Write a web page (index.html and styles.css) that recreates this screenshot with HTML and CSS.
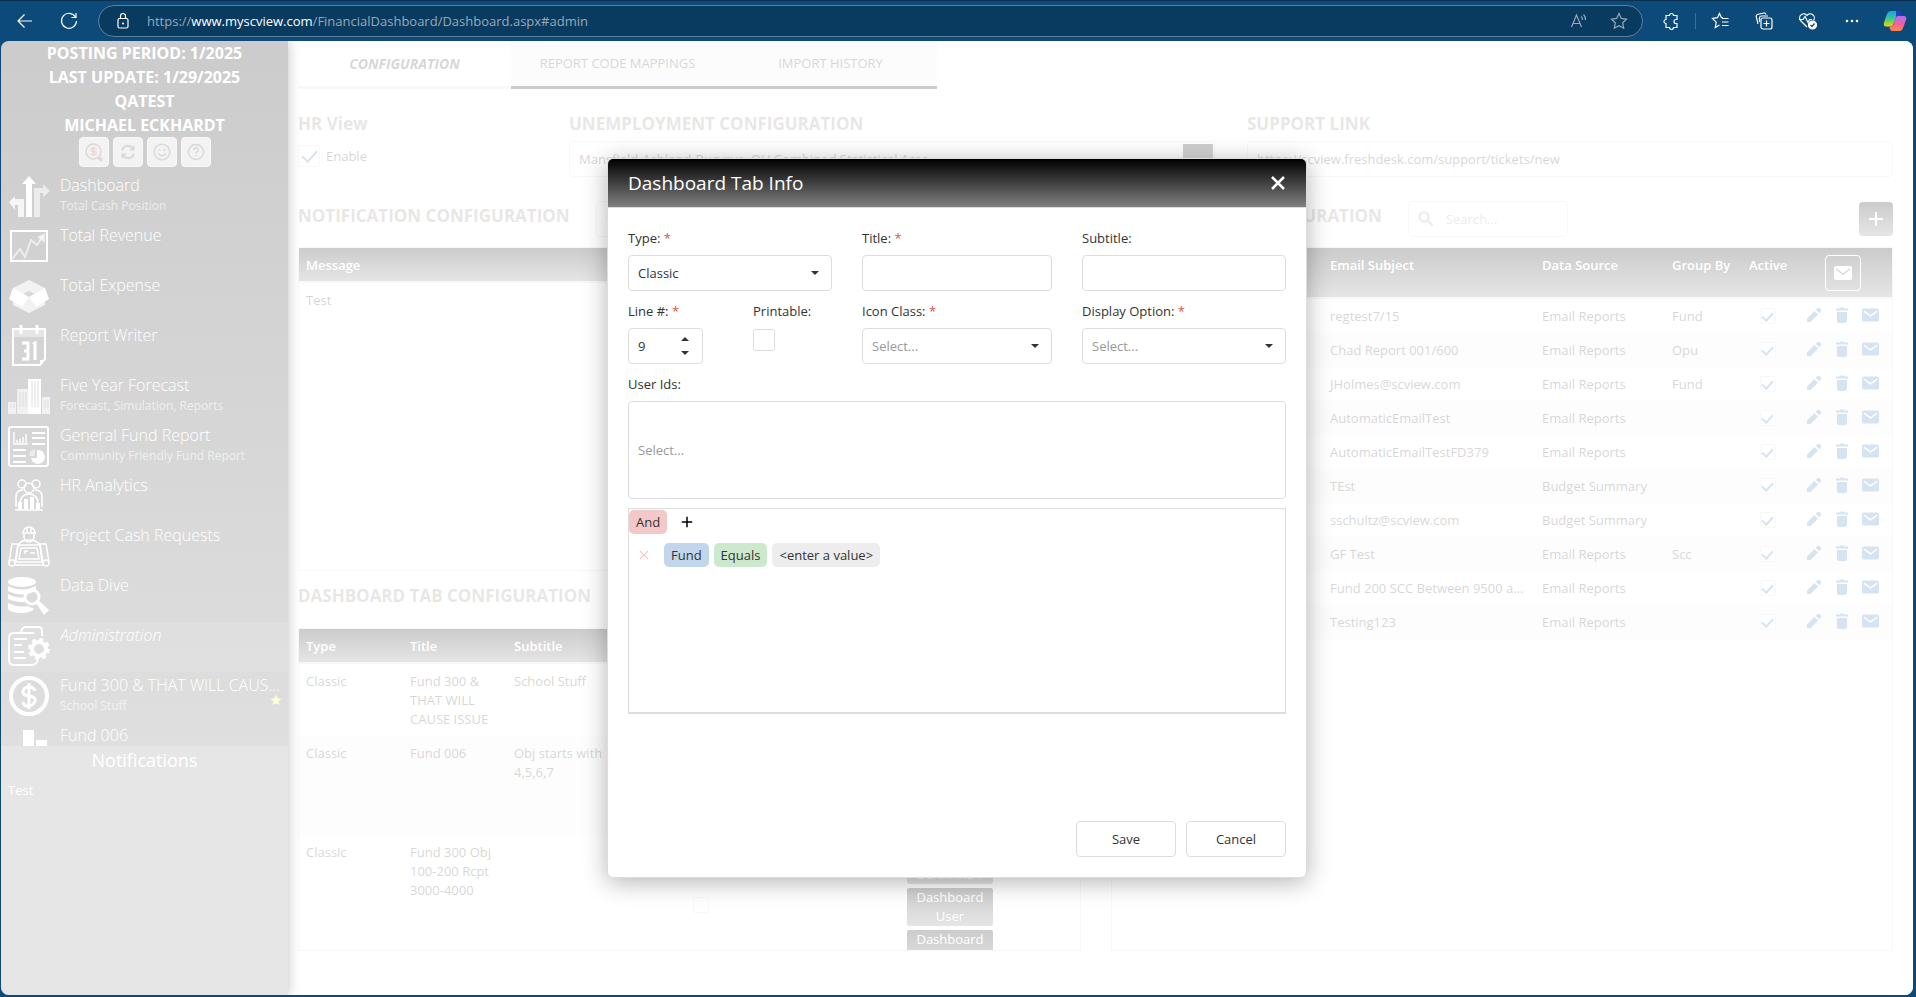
FILE: index.html
```html
<!DOCTYPE html>
<html lang="en">
<head>
  <meta charset="UTF-8" />
  <meta name="viewport" content="width=device-width, initial-scale=1.0"/>
  <title>Financial Dashboard</title>
  <link rel="stylesheet" href="styles.css">
</head>
<body>
  <!-- shared icons -->
  <svg class="sprite" aria-hidden="true">
    <symbol id="i-mail" viewBox="0 0 18 14">
      <rect x="0" y="0" width="18" height="14" rx="2" fill="currentColor"/>
      <path d="M2 3l7 5 7-5" fill="none" stroke="var(--line, #fff)" stroke-width="1.5"/>
    </symbol>
    <symbol id="i-pencil" viewBox="0 0 16 16">
      <path d="M1 15v-3.500l7.500-7.500 3.500 3.500L4.500 15zM9.800 2.800l1.700-1.700a1.500 1.500 0 0 1 2 0l1.400 1.400a1.500 1.500 0 0 1 0 2l-1.700 1.700z" fill="currentColor"/>
    </symbol>
    <symbol id="i-trash" viewBox="0 0 14 16">
      <path d="M1 1.500h3.500L5.500.500h3l1 1H13v2H1zM2 5h10v9a2 2 0 0 1-2 2H4a2 2 0 0 1-2-2z" fill="currentColor"/>
    </symbol>
    <symbol id="i-search" viewBox="0 0 16 16">
      <circle cx="6" cy="6" r="4.500" fill="none" stroke="currentColor" stroke-width="2"/>
      <path d="M9.500 9.500l5 5" stroke="currentColor" stroke-width="2.400"/>
    </symbol>
    <symbol id="i-plus" viewBox="0 0 16 16">
      <path d="M8 1v14M1 8h14" stroke="currentColor" stroke-width="2" fill="none"/>
    </symbol>
  </svg>

  <header class="toolbar">
    <button class="tool" aria-label="Back"><svg width="20" height="20" viewBox="0 0 20 20"><path d="M17 10H3M9.500 3.500L3 10l6.500 6.500"/></svg></button>
    <button class="tool" aria-label="Refresh"><svg width="20" height="20" viewBox="0 0 20 20"><path d="M16.500 6A7.500 7.500 0 1 0 17.500 10M17 2v4.500h-4.500"/></svg></button>
    <div class="address">
      <svg class="lock" width="16" height="18" viewBox="0 0 16 18"><rect x="3" y="6.500" width="10" height="9.500" rx="1.500"/><path d="M5.500 6.500V4a2.500 2.500 0 0 1 5 0v2.500"/><circle cx="8" cy="11.500" r=".5"/></svg>
      <span class="url">https://<b>www.myscview.com</b>/FinancialDashboard/Dashboard.aspx#admin</span>
      <button class="tool dim" aria-label="Read aloud"><svg width="18" height="18" viewBox="0 0 18 18"><path d="M1.500 15L6.500 3l5 12M3 11.500h7M11 4.500a4 4 0 0 1 1.500 3.500M13.500 2.500a7 7 0 0 1 2 5.500"/></svg></button>
      <button class="tool dim" aria-label="Favorite"><svg width="18" height="18" viewBox="0 0 18 18"><path d="M9 1.500l2.300 4.900 5.200.7-3.800 3.700 1 5.400L9 13.600l-4.700 2.600 1-5.400L1.500 7.100l5.200-.7z"/></svg></button>
    </div>
    <button class="tool" aria-label="Extensions"><svg width="18" height="18" viewBox="0 0 18 18"><path d="M4 3.500h3.500a2 2 0 0 1 4 0H15v4h-1a2 2 0 0 0 0 4h1v4h-3.500a2 2 0 0 1-4 0H4v-4a2 2 0 0 1 0-4z"/></svg></button>
    <span class="divider"></span>
    <button class="tool" aria-label="Favorites"><svg width="18" height="18" viewBox="0 0 18 18"><path d="M12 6l-1.500-.3L8.500 1.500 6.500 5.700 1.500 6.500l3.700 3.600-.9 5.400L8.500 13M11 6.500h6.500M11 10h6.500M11 13.500h6.500"/></svg></button>
    <button class="tool" aria-label="Collections"><svg width="18" height="18" viewBox="0 0 18 18"><path d="M3 12L1.200 4.500a2 2 0 0 1 1.300-2L8.500 1a2 2 0 0 1 2.500 1.500M4.500 10V6a2 2 0 0 1 2-2H13"/><rect x="6" y="6" width="11" height="11" rx="2"/><path d="M11.500 8.500v6M8.500 11.500h6"/></svg></button>
    <button class="tool" aria-label="Browser essentials"><svg width="20" height="18" viewBox="0 0 20 18"><path d="M9 15L2.500 8.500a4 4 0 0 1 6.500-5 4 4 0 0 1 6.500 5M1 7.500h4l2-3 3 6 1.500-3H14"/><circle cx="14.500" cy="13" r="4" fill="#fff"/><path d="M12.500 13l1.500 1.500 2.500-3" stroke="#0c4a7a"/></svg></button>
    <button class="tool" aria-label="More"><svg width="18" height="18" viewBox="0 0 18 18"><g fill="#fff" stroke="none"><circle cx="4" cy="9" r="1.300"/><circle cx="9" cy="9" r="1.300"/><circle cx="14" cy="9" r="1.300"/></g></svg></button>
    <button class="tool copilot" aria-label="Copilot">
      <svg width="24" height="22" viewBox="0 0 24 22">
        <defs>
          <linearGradient id="cpA" x1="0" y1="0" x2="0" y2="1"><stop offset="0" stop-color="#1a9fe8"/><stop offset=".5" stop-color="#3ccb8a"/><stop offset="1" stop-color="#f5d000"/></linearGradient>
          <linearGradient id="cpB" x1="0" y1="0" x2="0" y2="1"><stop offset="0" stop-color="#b06cf5"/><stop offset=".5" stop-color="#ee5fa5"/><stop offset="1" stop-color="#ff8a3d"/></linearGradient>
        </defs>
        <g stroke="none">
          <path d="M8 1h7q2 0 2.500 2l.8 3h-3q-2 0-2.700 2L10.500 14q-.8 2.500-3 2.500H3Q0 16.500 1 12.500L4 4q1-3 4-3z" fill="url(#cpA)"/>
          <path d="M13 1h2.500q2 0 2.500 2l.8 3h-3q-2 0-2.600 2z" fill="#1a3fc8"/>
          <path d="M16 21H9.500q-2 0-2.500-2l-.8-2.500h1.600q2 0 2.700-2L12.600 8q.7-2 2.700-2H21q3 0 2 4l-3 8q-1 3-4 3z" fill="url(#cpB)"/>
        </g>
      </svg>
    </button>
  </header>

  <div class="page">
    <aside class="sidebar">
      <div class="account">
        <div>POSTING PERIOD: 1/2025</div>
        <div>LAST UPDATE: 1/29/2025</div>
        <div>QATEST</div>
        <div>MICHAEL ECKHARDT</div>
        <div class="account-buttons">
          <button aria-label="Search accounts"><svg width="18" height="20" viewBox="0 0 18 20"><circle cx="8.500" cy="9.500" r="7.500"/><path d="M13.500 15l3.500 4" stroke-width="3"/><path d="M12 6.500H6.500v3h4.500v3H5.500M8.500 5v9" stroke="#b4442c"/></svg></button>
          <button aria-label="Reload"><svg width="18" height="18" viewBox="0 0 18 18"><path d="M3 7.500a6 6 0 0 1 10.500-2.500M15 10.500a6 6 0 0 1-10.500 2.500" stroke-width="2"/><path d="M15.500 2v5.500H10zM2.500 16v-5.500H8z" fill="#444" stroke="none"/></svg></button>
          <button aria-label="Feedback"><svg width="18" height="18" viewBox="0 0 18 18"><circle cx="9" cy="9" r="7.800"/><path d="M5.500 7h2M10.500 7h2M5 10.500q4 4.500 8 0"/></svg></button>
          <button aria-label="Help"><svg width="18" height="18" viewBox="0 0 18 18"><circle cx="9" cy="9" r="7.500"/><path d="M6.800 7a2.200 2.200 0 1 1 3.200 2q-1 .5-1 1.500M9 12v1.500"/></svg></button>
        </div>
      </div>

      <nav class="menu">
        <a href="#dashboard">
          <svg viewBox="0 0 42 42"><path d="M18 42V9h-4l7-8 7 8h-4v33z"/><path d="M10 42V30H7v5L1 27l6-6v3h9v18z" opacity=".8"/><path d="M26 42V13h9V9l7 7-7 6v-4h-3v24z" opacity=".6"/></svg>
          <span class="name">Dashboard</span><small>Total Cash Position</small>
        </a>
        <a href="#revenue">
          <svg viewBox="0 0 42 42"><g fill="none" stroke="#fff" stroke-width="2"><rect x="3" y="6" width="36" height="30"/><path d="M4 34l8-10 5 8 6-17 6 5 6-9" opacity=".6"/></g><path d="M29 12l8-4v10z" opacity=".6"/></svg>
          <span class="name">Total Revenue</span>
        </a>
        <a href="#expense">
          <svg viewBox="0 0 42 42"><path d="M21 5l16 8v17l-16 8-16-8V13z" opacity=".7"/><path d="M21 16l-6 3 6 4 6-4z" fill="#444"/><path d="M5 13l16 9-7 10-13-8zM37 13l-16 9 7 10 13-8z"/></svg>
          <span class="name">Total Expense</span>
        </a>
        <a href="#writer">
          <svg viewBox="0 0 42 42"><g fill="none" stroke="#fff" stroke-width="2"><path d="M5 4h32v30l-5 6H5z"/><path d="M13 0v9M29 0v9" stroke-width="3"/></g><path d="M6 5h30v7H6z" opacity=".4"/><path d="M32 40v-5h5z"/><path d="M14 18h6v16h-6M16 26h4M25 19l2-1v17" fill="none" stroke="#fff" stroke-width="3"/></svg>
          <span class="name">Report Writer</span>
        </a>
        <a href="#forecast">
          <svg viewBox="0 0 42 42"><path d="M0 27h8v12H0zM34 22h8v17h-8zM9 14h11v25H9z" opacity=".65"/><path d="M20 4h13v35H20z"/><path d="M24 6v26M27 6v26M30 6v26M12 17v15M15 17v15M18 17v15M3 29v4M6 29v4M37 25v8M40 25v8" stroke="#555" fill="none"/></svg>
          <span class="name">Five Year Forecast</span><small>Forecast, Simulation, Reports</small>
        </a>
        <a href="#general-fund">
          <svg viewBox="0 0 42 42"><g fill="none" stroke="#fff" stroke-width="2"><rect x="1" y="2" width="39" height="39" rx="2"/><path d="M24 8h13M24 13h13M24 19h13M5 25h13M5 31h13M5 37h13" /><path d="M6 7v12h14M9 18v-3M12 18v-4M15 18v-6M18 18V9" opacity=".7"/></g><path d="M29 25a7 7 0 1 1-6 8h6z"/><path d="M27 24v7h-6a7 7 0 0 1 6-7z" opacity=".5"/></svg>
          <span class="name">General Fund Report</span><small>Community Friendly Fund Report</small>
        </a>
        <a href="#hr">
          <svg viewBox="0 0 42 42"><g fill="none" stroke="#fff" stroke-width="1.500"><circle cx="14" cy="9" r="4"/><circle cx="28" cy="9" r="4"/><circle cx="21" cy="13" r="5"/><path d="M8 32V22q0-7 7-7M34 32V22q0-7-7-7M12 30q0-11 9-11t9 11M7 35h28"/></g><path d="M10 27h4v7h-4zM16 24h4v10h-4zM22 22h4v12h-4zM28 28h4v6h-4z"/></svg>
          <span class="name">HR Analytics</span>
        </a>
        <a href="#cash">
          <svg viewBox="0 0 42 42"><g fill="none" stroke="#fff" stroke-width="1.500"><path d="M15 8a6 6 0 0 1 12 0zM14 8h14M16 9v3a5 5 0 0 0 10 0V9M19 3v4M23 3v4M10 20q3-5 11-5t11 5"/><path d="M10 20h22l3 17H7zM13 23h16l2 11H11zM17 29v-3h3M22 28h5"/><path d="M1 37l3-18h6L8 37M41 37l-3-18h-6l2 18"/><circle cx="4" cy="38" r="3"/><circle cx="38" cy="38" r="3"/><path d="M7 40h28"/></g></svg>
          <span class="name">Project Cash Requests</span>
        </a>
        <a href="#data">
          <svg viewBox="0 0 42 42"><ellipse cx="14" cy="7" rx="14" ry="5"/><path d="M0 11q14 7 28 0v5q-14 7-28 0zM0 19q9 5 17 3-1 3 0 5-9 1-17-3zM0 28q10 5 20 3l6 3q-4 4-12 4-11 0-14-4z"/><circle cx="24" cy="22" r="7" fill="none" stroke="#fff" stroke-width="3"/><path d="M28 28l3-2 10 9-5 5z"/></svg>
          <span class="name">Data Dive</span>
        </a>
        <a href="#admin" class="active">
          <svg viewBox="0 0 42 42"><g fill="none" stroke="#fff" stroke-width="2"><path d="M30 35q-2 5-6 5H6q-5 0-5-5V13q0-5 5-5h20M13 7q1-5 5-5h12q4 0 4 4v5M6 14h13M6 20h8M6 27h10M6 33h12"/><circle cx="31" cy="24" r="7" stroke-width="4"/><circle cx="31" cy="24" r="9.500" stroke-width="3" stroke-dasharray="4 3.460"/></g></svg>
          <span class="name">Administration</span>
        </a>
        <a href="#fund-300">
          <svg viewBox="0 0 42 42"><circle cx="21" cy="21" r="18" fill="none" stroke="#fff" stroke-width="4"/><path d="M27 16q-1-4-6-4t-6 4 6 5 6 5-6 5-6-4M21 8v26" fill="none" stroke="#fff" stroke-width="3"/></svg>
          <span class="name">Fund 300 &amp; THAT WILL CAUSE ISSUE</span><small>School Stuff</small>
          <svg class="star" viewBox="0 0 16 16"><path d="M8 1l2.200 4.600 5 .6-3.700 3.500 1 5L8 12.200 3.500 14.700l1-5L.8 6.200l5-.6z"/></svg>
        </a>
        <a href="#fund-006">
          <svg viewBox="0 0 42 42"><path d="M15 5h11v37H15zM28 15h11v27H28z"/></svg>
          <span class="name">Fund 006</span>
        </a>
      </nav>

      <section class="notices">
        <h2>Notifications</h2>
        <p>Test</p>
      </section>
    </aside>

    <main class="content">
      <div class="tabs">
        <button class="selected">CONFIGURATION</button>
        <button>REPORT CODE MAPPINGS</button>
        <button>IMPORT HISTORY</button>
      </div>

      <div class="settings">
        <section>
          <h3>HR View</h3>
          <label class="enable"><input type="checkbox" class="check" checked> Enable</label>
        </section>
        <section>
          <h3><label for="area">UNEMPLOYMENT CONFIGURATION</label></h3>
          <div class="drop-button">
            <select id="area" class="field"><option>Mansfield-Ashland-Bucyrus, OH Combined Statistical Area</option></select>
          </div>
        </section>
        <section>
          <h3><label for="support">SUPPORT LINK</label></h3>
          <input id="support" class="field" type="text" value="https://scview.freshdesk.com/support/tickets/new">
        </section>
      </div>

      <div class="grids">
        <div class="column">
          <div class="grid-title">
            <h3>NOTIFICATION CONFIGURATION</h3>
            <div class="search"><svg width="16" height="16"><use href="#i-search"/></svg><input type="text" aria-label="Search notifications" placeholder="Search..."></div>
          </div>
          <div class="panel">
            <table>
              <thead><tr><th>Message</th></tr></thead>
              <tbody><tr><td>Test</td></tr></tbody>
            </table>
          </div>
          <div class="grid-title second">
            <h3>DASHBOARD TAB CONFIGURATION</h3>
          </div>
          <div class="panel">
            <table class="tabs-table">
              <colgroup><col class="c-text"><col class="c-text"><col class="c-text"><col class="c-print"><col class="c-icon"><col class="c-users"><col></colgroup>
              <thead><tr><th>Type</th><th>Title</th><th>Subtitle</th><th>Printable</th><th>Icon</th><th>Users</th><th></th></tr></thead>
              <tbody>
                <tr class="short"><td>Classic</td><td>Fund 300 &amp; THAT WILL CAUSE ISSUE</td><td>School Stuff</td><td></td><td></td><td></td><td></td></tr>
                <tr class="mid"><td>Classic</td><td>Fund 006</td><td>Obj starts with 4,5,6,7</td><td></td><td></td><td></td><td></td></tr>
                <tr class="tall">
                  <td>Classic</td><td>Fund 300 Obj 100-200 Rcpt 3000-4000</td><td></td>
                  <td class="center"><input type="checkbox" class="check small" aria-label="Printable"></td><td></td>
                  <td class="tags"><span>MICHAEL ECKHARDT</span><span>Dashboard User</span><span>Dashboard Admin</span></td><td></td>
                </tr>
              </tbody>
            </table>
          </div>
        </div>

        <div class="column">
          <div class="grid-title">
            <h3>EMAIL REPORT CONFIGURATION</h3>
            <div class="search"><svg width="16" height="16"><use href="#i-search"/></svg><input type="text" aria-label="Search emails" placeholder="Search..."></div>
            <button class="add" aria-label="Add email"><svg width="16" height="16"><use href="#i-plus"/></svg></button>
          </div>
          <div class="panel">
            <table class="email-table">
              <colgroup><col><col class="c-subject"><col class="c-source"><col class="c-group"><col class="c-active"><col class="c-actions"></colgroup>
              <thead>
                <tr><th>Name</th><th>Email Subject</th><th>Data Source</th><th>Group By</th><th>Active</th>
                  <th class="send-all"><button aria-label="Send all"><svg width="18" height="14"><use href="#i-mail"/></svg></button></th></tr>
              </thead>
              <tbody id="emailRows"></tbody>
            </table>
          </div>
        </div>
      </div>
    </main>

    <div class="shade"></div>

    <div class="dialog-wrap">
      <form class="dialog" role="dialog" aria-labelledby="dialogTitle">
        <div class="dialog-head">
          <h1 id="dialogTitle">Dashboard Tab Info</h1>
          <button type="button" aria-label="Close"><svg width="16" height="16" viewBox="0 0 16 16"><path d="M2 2l12 12M14 2L2 14"/></svg></button>
        </div>
        <div class="dialog-body">
          <div class="form-row">
            <div><label for="type">Type: <i>*</i></label><div class="drop"><select id="type" class="field"><option>Classic</option></select></div></div>
            <div><label for="title">Title: <i>*</i></label><input id="title" class="field" type="text"></div>
            <div><label for="subtitle">Subtitle:</label><input id="subtitle" class="field" type="text"></div>
          </div>
          <div class="form-row">
            <div class="pair">
              <div><label for="line">Line #: <i>*</i></label>
                <div class="spin"><input id="line" class="field" type="text" value="9"><span class="arrows"><button type="button" class="up" aria-label="Increase"></button><button type="button" class="down" aria-label="Decrease"></button></span></div></div>
              <div><label for="printable">Printable:</label><input id="printable" type="checkbox" class="check"></div>
            </div>
            <div><label for="icon">Icon Class: <i>*</i></label><div class="drop"><select id="icon" class="field empty"><option>Select...</option></select></div></div>
            <div><label for="display">Display Option: <i>*</i></label><div class="drop"><select id="display" class="field empty"><option>Select...</option></select></div></div>
          </div>
          <label for="users">User Ids:</label>
          <input id="users" class="field users" type="text" placeholder="Select...">

          <div class="filter">
            <div class="filter-row">
              <button type="button" class="chip and">And</button>
              <button type="button" class="icon-btn" aria-label="Add condition"><svg width="12" height="12" viewBox="0 0 16 16"><use href="#i-plus"/></svg></button>
            </div>
            <div class="filter-row nested">
              <button type="button" class="icon-btn remove" aria-label="Remove condition"><svg width="10" height="10" viewBox="0 0 12 12"><path d="M1 1l10 10M11 1L1 11"/></svg></button>
              <button type="button" class="chip item">Fund</button>
              <button type="button" class="chip op">Equals</button>
              <button type="button" class="chip value">&lt;enter a value&gt;</button>
            </div>
          </div>

          <div class="dialog-buttons">
            <button type="button">Save</button>
            <button type="button">Cancel</button>
          </div>
        </div>
      </form>
    </div>
  </div>

  <script>
    const emails = [
      ["regtest7/15", "Email Reports", "Fund"],
      ["Chad Report 001/600", "Email Reports", "Opu"],
      ["JHolmes@scview.com", "Email Reports", "Fund"],
      ["AutomaticEmailTest", "Email Reports", ""],
      ["AutomaticEmailTestFD379", "Email Reports", ""],
      ["TEst", "Budget Summary", ""],
      ["sschultz@scview.com", "Budget Summary", ""],
      ["GF Test", "Email Reports", "Scc"],
      ["Fund 200 SCC Between 9500 and 9600", "Email Reports", ""],
      ["Testing123", "Email Reports", ""]
    ];

    document.getElementById("emailRows").innerHTML = emails.map(([subject, source, group]) => `
      <tr>
        <td></td><td>${subject}</td><td>${source}</td><td>${group}</td>
        <td class="center"><input type="checkbox" class="check small" aria-label="Active" checked></td>
        <td><div class="actions">
          <button aria-label="Edit"><svg width="16" height="16"><use href="#i-pencil"/></svg></button>
          <button aria-label="Delete"><svg width="14" height="16"><use href="#i-trash"/></svg></button>
          <button aria-label="Send"><svg width="17" height="14"><use href="#i-mail"/></svg></button>
        </div></td>
      </tr>`).join("");
  </script>
</body>
</html>
```
FILE: styles.css
```css
* {
  box-sizing: border-box;
}

body {
  margin: 0;
  height: 100vh;
  display: flex;
  flex-direction: column;
  overflow: hidden;
  background-color: #0c4a7a;
  font-family: 'Open Sans', 'Noto Sans', sans-serif;
  font-size: 13px;
  line-height: 19px;
  color: #333;
}

button, input, select {
  font: inherit;
  color: inherit;
  margin: 0;
}

button {
  padding: 0;
  border: none;
  background: none;
  cursor: pointer;
}

h1, h2, h3, p {
  margin: 0;
}

.sprite {
  display: none;
}

/* browser bar */
.toolbar {
  display: flex;
  align-items: center;
  height: 41px;
  padding: 0 9px 0 15px;
  border-top: 1px solid #0a2f50;
  flex: none;
}

.tool {
  display: flex;
  align-items: center;
  justify-content: center;
  width: 20px;
  margin-right: 24px;
}

.tool svg, .lock {
  fill: none;
  stroke: #fff;
  stroke-width: 1.2;
  flex: none;
}

.tool.dim {
  margin: 0 0 0 20px;
}

.tool.dim svg {
  stroke: #9aa9b5;
}

.tool.copilot {
  margin: 0 0 0 -3px;
  width: 24px;
}

.address {
  flex: 1;
  display: flex;
  align-items: center;
  height: 32px;
  margin: 0 18px 0 -5px;
  padding: 0 13px 0 16px;
  border: 1px solid #5f8099;
  border-radius: 16px;
  background-color: #093a60;
}

.url {
  flex: 1;
  margin-left: 16px;
  color: #9aa9b5;
}

.url b {
  font-weight: normal;
  color: #fff;
}

.divider {
  width: 1px;
  height: 16px;
  margin: 0 14px 0 -10px;
  background-color: #3f6f96;
}

/* page */
.page {
  position: relative;
  flex: 1;
  display: flex;
  min-height: 0;
  margin: 0 3px 2px 1px;
  border-radius: 8px;
  overflow: hidden;
  background-color: #fff;
}

.shade {
  position: absolute;
  inset: 0;
  background-color: rgba(255, 255, 255, 0.8);
}

.sidebar {
  position: relative;
  flex: none;
  display: flex;
  flex-direction: column;
  width: 287px;
  color: #fff;
  background: linear-gradient(#000, #808080);
  box-shadow: 2px 0 10px rgba(0, 0, 0, 0.9);
}

.account {
  height: 131px;
  font-size: 16px;
  font-weight: bold;
  line-height: 24px;
  text-align: center;
}

.account-buttons {
  display: flex;
  justify-content: center;
  gap: 4px;
}

.account-buttons button {
  display: flex;
  align-items: center;
  justify-content: center;
  width: 30px;
  height: 30px;
  border: 1px solid #ddd;
  border-radius: 4px;
  background-color: #c0c0c0;
}

.account-buttons svg {
  fill: none;
  stroke: #444;
  stroke-width: 1.5;
}

.menu {
  flex: 1;
  min-height: 0;
  overflow: hidden;
}

.menu a {
  display: grid;
  grid-template-columns: 52px 1fr;
  grid-template-rows: 24px 18px;
  height: 50px;
  padding: 1px 5px 0 7px;
  color: #fff;
  text-decoration: none;
  position: relative;
}

.menu a > svg:first-child {
  grid-row: 1 / 3;
  width: 42px;
  height: 42px;
  margin-top: 2px;
  fill: #fff;
}

.menu a.active {
  background-color: rgba(255, 255, 255, 0.1);
  font-style: italic;
}

.menu .name {
  font-size: 16px;
  font-weight: 300;
  line-height: 24px;
  white-space: nowrap;
  overflow: hidden;
  text-overflow: ellipsis;
}

.menu small {
  font-size: 12px;
  line-height: 18px;
  opacity: 0.6;
}

.menu .star {
  position: absolute;
  right: 6px;
  bottom: 16px;
  width: 12px;
  height: 12px;
  fill: #ffff30;
}

.notices {
  flex: 0 0 249px;
  padding: 1px 7px;
  background-color: #808080;
}

.notices h2 {
  font-size: 18px;
  font-weight: normal;
  line-height: 26px;
  text-align: center;
}

.notices p {
  margin-top: 8px;
}

.content {
  flex: 1;
  min-width: 0;
  display: flex;
  flex-direction: column;
  padding: 0 20px 44px 10px;
}

.tabs {
  display: flex;
}

.tabs button {
  flex: 0 0 213px;
  height: 48px;
  border-bottom: 3px solid #000;
  background-color: #f0f0f0;
}

.tabs .selected {
  border-bottom-color: #ddd;
  background-color: #fff;
  font-size: 14px;
  font-weight: bold;
  font-style: italic;
}

h3 {
  font-size: 17px;
  line-height: 24px;
  color: #8c8583;
}

.settings {
  display: grid;
  grid-template-columns: 239px 1fr 1fr;
  gap: 32px;
  padding-top: 23px;
}

.settings .field {
  margin-top: 5px;
}

.enable {
  display: flex;
  align-items: center;
  gap: 6px;
  margin-top: 9px;
}

.field {
  display: block;
  width: 100%;
  height: 36px;
  padding: 0 9px;
  border: 1px solid #ddd;
  border-radius: 4px;
  background-color: #fff;
  appearance: none;
  outline: none;
}

.field.empty, .field::placeholder {
  color: #999;
  opacity: 1;
}

.check {
  appearance: none;
  display: flex;
  justify-content: center;
  width: 22px;
  height: 22px;
  border: 1px solid #ddd;
  border-radius: 2px;
  background-color: #fff;
}

.check:checked::before {
  content: "";
  width: 7px;
  height: 13px;
  margin-top: 1px;
  border: solid #337ab7;
  border-width: 0 2px 2px 0;
  transform: rotate(42deg);
}

.check.small {
  display: inline-flex;
  width: 16px;
  height: 16px;
  vertical-align: middle;
}

.check.small:checked::before {
  width: 5px;
  height: 9px;
}

.drop, .drop-button, .spin {
  position: relative;
}

.drop::after {
  content: "";
  position: absolute;
  right: 13px;
  top: 16px;
  border: 4px solid transparent;
  border-top-color: #333;
  pointer-events: none;
}

.drop-button::after {
  content: "";
  position: absolute;
  right: 2px;
  top: 3px;
  width: 30px;
  height: 30px;
  background: linear-gradient(#000, #808080);
}

/* grids */
.grids {
  flex: 1;
  min-height: 0;
  display: grid;
  grid-template-columns: 1fr 1fr;
  gap: 30px;
  padding-top: 24px;
}

.column {
  display: flex;
  flex-direction: column;
  min-height: 0;
}

.grid-title {
  display: flex;
  align-items: flex-start;
  height: 46px;
}

.grid-title h3 {
  margin-top: 3px;
}

.grid-title.second {
  height: 57px;
  padding-top: 10px;
}

.search {
  display: flex;
  align-items: center;
  gap: 10px;
  width: 160px;
  height: 36px;
  margin-left: 26px;
  padding: 0 9px;
  border: 1px solid #ddd;
  border-radius: 4px;
  color: #999;
}

.search svg {
  flex: none;
}

.search input {
  width: 100%;
  border: none;
  outline: none;
  background: none;
}

.search input::placeholder {
  color: #999;
}

.add {
  display: flex;
  align-items: center;
  justify-content: center;
  width: 34px;
  height: 34px;
  margin: 1px 0 0 auto;
  border-radius: 4px;
  color: #fff;
  background: linear-gradient(#000, #808080);
}

.panel {
  flex: 1 1 0;
  min-height: 0;
  overflow: hidden;
  border: 1px solid #ddd;
}

table {
  width: 100%;
  border-collapse: collapse;
  table-layout: fixed;
}

thead tr {
  background: linear-gradient(#000, #808080);
}

th {
  height: 33px;
  padding: 8px 7px 6px;
  color: #fff;
  font-weight: 600;
  text-align: left;
  vertical-align: top;
}

thead {
  border-bottom: 2px solid #ddd;
}

td {
  height: 34px;
  padding: 8px 7px 7px;
  vertical-align: top;
  overflow: hidden;
  text-overflow: ellipsis;
}

.center {
  text-align: center;
}

tbody tr:nth-child(even) {
  background-color: #f5f5f5;
}

.c-text { width: 104px; }
.c-print { width: 180px; }
.c-icon { width: 108px; }
.c-users { width: 102px; }
.c-subject { width: 212px; }
.c-source { width: 130px; }
.c-group { width: 77px; }
.c-active { width: 51px; }
.c-actions { width: 99px; }

.short { height: 72px; }
.mid { height: 99px; }

.tall .center {
  padding-top: 60px;
}

.tags span {
  display: block;
  margin: 3px 1px 4px;
  border-radius: 2px;
  color: #fff;
  text-align: center;
  background: linear-gradient(#000, #808080);
}

.email-table td {
  white-space: nowrap;
}

.email-table th {
  height: 50px;
  white-space: nowrap;
}

.email-table tbody tr:nth-child(n) td:last-child, .email-table .center {
  padding: 0 0 2px;
  vertical-align: middle;
}

.email-table .send-all {
  padding: 7px 7px 6px;
}

.send-all button {
  display: flex;
  align-items: center;
  justify-content: center;
  width: 36px;
  height: 36px;
  margin-left: 25px;
  border: 1px solid #fff;
  border-radius: 4px;
  --line: #444;
}

.actions {
  display: flex;
  align-items: center;
  gap: 13px;
  padding-left: 13px;
  color: #337ab7;
}

.actions button {
  display: flex;
}

/* dialog */
.dialog-wrap {
  position: absolute;
  inset: 0;
  display: flex;
  align-items: center;
  justify-content: center;
}

.dialog {
  display: flex;
  flex-direction: column;
  width: 700px;
  height: 720px;
  border: 1px solid #ddd;
  border-radius: 6px;
  overflow: hidden;
  background-color: #fff;
  box-shadow: 0 4px 24px rgba(0, 0, 0, 0.3);
}

.dialog-head {
  display: flex;
  align-items: center;
  justify-content: space-between;
  flex: none;
  height: 49px;
  padding: 0 20px;
  border-bottom: 1px solid #ddd;
  color: #fff;
  background: linear-gradient(#000, #808080);
}

.dialog-head h1 {
  font-size: 19px;
  font-weight: normal;
  line-height: 26px;
}

.dialog-head svg {
  display: block;
  fill: none;
  stroke: #fff;
  stroke-width: 2.5;
}

.dialog-body {
  flex: 1;
  display: flex;
  flex-direction: column;
  padding: 20px;
}

.dialog-body label {
  display: block;
  height: 27px;
  line-height: 20px;
}

.dialog-body label i {
  font-style: normal;
  color: #d9534f;
}

.form-row {
  display: grid;
  grid-template-columns: 204px 190px 204px;
  justify-content: space-between;
  margin-bottom: 10px;
}

.pair {
  display: grid;
  grid-template-columns: 75px 1fr;
  gap: 50px;
}

.pair .check {
  margin-top: 28px;
}

.pair label + .check {
  margin-top: 1px;
}

.arrows {
  position: absolute;
  top: 5px;
  right: 14px;
  display: grid;
  gap: 10px;
}

.arrows button {
  border: 4px solid transparent;
}

.arrows .up {
  border-bottom-color: #333;
}

.arrows .down {
  border-top-color: #333;
}

.field.users {
  height: 98px;
}

.filter {
  height: 206px;
  margin-top: 9px;
  border: 1px solid #ddd;
  border-bottom-width: 2px;
}

.filter-row {
  display: flex;
  align-items: center;
  gap: 5px;
  height: 24px;
  margin: 1px 0 9px;
}

.filter-row .and {
  margin-right: 3px;
}

.nested {
  padding-left: 3px;
}

.nested .item {
  margin-left: 3px;
}

.chip {
  height: 24px;
  padding: 0 7px;
  border-radius: 5px;
}

.and { background-color: #f4c8c8; }
.item { background-color: #c1d6ea; }
.op { background-color: #cce8cd; }
.value { background-color: #ededed; }

.icon-btn {
  display: flex;
  align-items: center;
  justify-content: center;
  width: 24px;
  height: 24px;
  color: #000;
}

.remove svg {
  fill: none;
  stroke: #f4c8c8;
  stroke-width: 1.5;
}

.dialog-buttons {
  display: flex;
  justify-content: flex-end;
  gap: 10px;
  margin-top: auto;
}

.dialog-buttons button {
  width: 100px;
  height: 36px;
  border: 1px solid #ddd;
  border-radius: 4px;
}
```
